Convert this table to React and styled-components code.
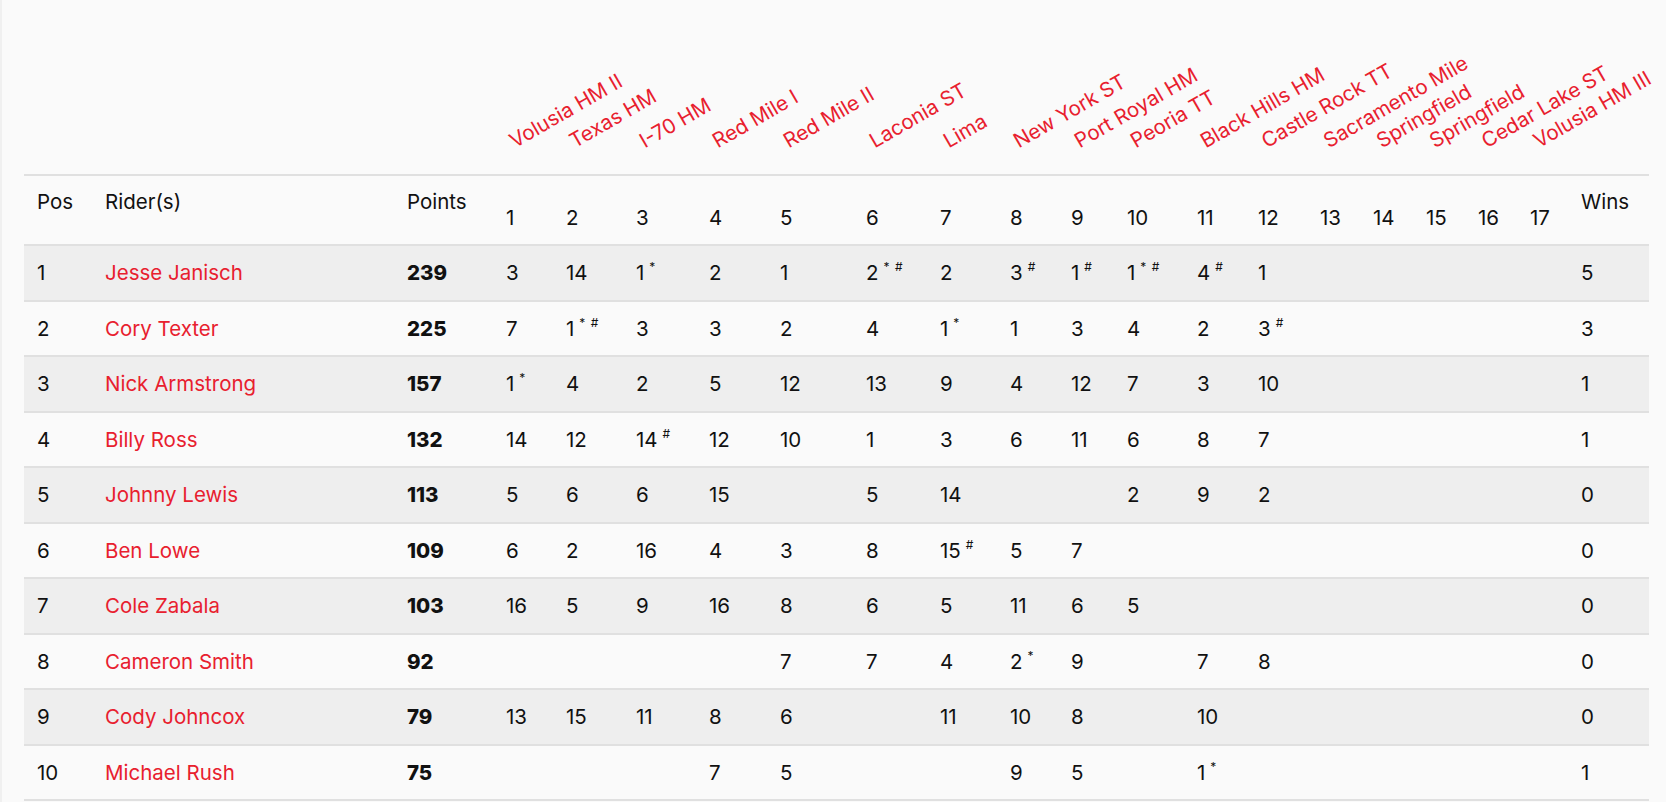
import React from 'react';
import styled, { createGlobalStyle } from 'styled-components';

const GlobalStyle = createGlobalStyle`
  html, body {
    margin: 0;
    padding: 0;
    background: #fafafa;
  }
  body {
    font-family: Inter, "Noto Sans", "Liberation Sans", sans-serif;
    color: #111;
  }
`;

const Page = styled.div`
  min-height: 100vh;
  box-sizing: border-box;
  border-left: 2px solid #f0f0f0;
  padding: 0 17px 0 22px;
  overflow: hidden;
`;

const Table = styled.table`
  width: 1625px;
  table-layout: fixed;
  border-collapse: separate;
  border-spacing: 0;
  font-size: 20.5px;
  line-height: 23.5px;
`;

const Col = styled.col`
  width: ${(p) => p.$w}px;
`;

const LabelRow = styled.tr`
  height: 174px;
`;

const LabelCell = styled.th`
  padding: 0 0 22px 24px;
  vertical-align: bottom;
  text-align: left;
  font-weight: 400;
`;

const RaceLabel = styled.span`
  display: inline-block;
  width: 0;
  white-space: nowrap;
  color: #e8202e;
  transform-origin: 0 100%;
  transform: rotate(-30deg);
`;

const HeadCell = styled.th`
  border-top: 2px solid #e0e0e0;
  padding: ${(p) => (p.$num ? '0 0 15px 13px' : '14px 0 0 13px')};
  height: 70px;
  box-sizing: border-box;
  vertical-align: ${(p) => (p.$num ? 'bottom' : 'top')};
  text-align: left;
  font-weight: 400;
  white-space: nowrap;
`;

const Row = styled.tr`
  background: ${(p) => (p.$alt ? '#eeeeee' : '#fafafa')};
`;

const Cell = styled.td`
  border-top: 2px solid #e0e0e0;
  border-bottom: ${(p) => (p.$last ? '2px solid #e0e0e0' : 'none')};
  padding: 15px 0 15px 13px;
  white-space: nowrap;
  font-weight: ${(p) => (p.$bold ? 800 : 400)};
`;

const RiderLink = styled.a`
  color: #e8202e;
  text-decoration: none;
`;

const Sup = styled.sup`
  font-size: 12px;
  line-height: 0;
  margin-left: 5px;
  vertical-align: 9px;
  word-spacing: 2px;
`;

const widths = [68, 302, 99, 60, 70, 73, 71, 86, 74, 70, 61, 56, 70, 61, 62, 53, 53, 52, 52, 51, 81];

const races = [
  'Volusia HM II', 'Texas HM', 'I-70 HM', 'Red Mile I', 'Red Mile II', 'Laconia ST', 'Lima',
  'New York ST', 'Port Royal HM', 'Peoria TT', 'Black Hills HM', 'Castle Rock TT',
  'Sacramento Mile', 'Springfield', 'Springfield', 'Cedar Lake ST', 'Volusia HM III',
];

const riders = [
  { pos: 1, name: 'Jesse Janisch', pts: 239, wins: 5, res: ['3', '14', '1*', '2', '1', '2*#', '2', '3#', '1#', '1*#', '4#', '1'] },
  { pos: 2, name: 'Cory Texter', pts: 225, wins: 3, res: ['7', '1*#', '3', '3', '2', '4', '1*', '1', '3', '4', '2', '3#'] },
  { pos: 3, name: 'Nick Armstrong', pts: 157, wins: 1, res: ['1*', '4', '2', '5', '12', '13', '9', '4', '12', '7', '3', '10'] },
  { pos: 4, name: 'Billy Ross', pts: 132, wins: 1, res: ['14', '12', '14#', '12', '10', '1', '3', '6', '11', '6', '8', '7'] },
  { pos: 5, name: 'Johnny Lewis', pts: 113, wins: 0, res: ['5', '6', '6', '15', '', '5', '14', '', '', '2', '9', '2'] },
  { pos: 6, name: 'Ben Lowe', pts: 109, wins: 0, res: ['6', '2', '16', '4', '3', '8', '15#', '5', '7'] },
  { pos: 7, name: 'Cole Zabala', pts: 103, wins: 0, res: ['16', '5', '9', '16', '8', '6', '5', '11', '6', '5'] },
  { pos: 8, name: 'Cameron Smith', pts: 92, wins: 0, res: ['', '', '', '', '7', '7', '4', '2*', '9', '', '7', '8'] },
  { pos: 9, name: 'Cody Johncox', pts: 79, wins: 0, res: ['13', '15', '11', '8', '6', '', '11', '10', '8', '', '10'] },
  { pos: 10, name: 'Michael Rush', pts: 75, wins: 1, res: ['', '', '', '7', '5', '', '', '9', '5', '', '1*'] },
];

// "2*#" -> 2 with superscript "* #"
const Result = ({ value }) => {
  if (!value) return null;
  const num = value.match(/^\d+/)[0];
  const flags = value.slice(num.length).split('');
  return (
    <>
      {num}
      {flags.length > 0 && <Sup>{flags.join(' ')}</Sup>}
    </>
  );
};

const App = () => (
  <>
    <GlobalStyle />
    <Page>
      <Table>
        <colgroup>
          {widths.map((w, i) => <Col key={i} $w={w} />)}
        </colgroup>
        <thead>
          <LabelRow>
            <th />
            <th />
            <th />
            {races.map((r, i) => (
              <LabelCell key={i}><RaceLabel>{r}</RaceLabel></LabelCell>
            ))}
            <th />
          </LabelRow>
          <tr>
            <HeadCell>Pos</HeadCell>
            <HeadCell>Rider(s)</HeadCell>
            <HeadCell>Points</HeadCell>
            {races.map((_, i) => <HeadCell key={i} $num>{i + 1}</HeadCell>)}
            <HeadCell>Wins</HeadCell>
          </tr>
        </thead>
        <tbody>
          {riders.map((r, idx) => {
            const last = idx === riders.length - 1;
            return (
              <Row key={r.pos} $alt={idx % 2 === 0}>
                <Cell $last={last}>{r.pos}</Cell>
                <Cell $last={last}><RiderLink href="#">{r.name}</RiderLink></Cell>
                <Cell $last={last} $bold>{r.pts}</Cell>
                {races.map((_, i) => (
                  <Cell key={i} $last={last}><Result value={r.res[i]} /></Cell>
                ))}
                <Cell $last={last}>{r.wins}</Cell>
              </Row>
            );
          })}
        </tbody>
      </Table>
    </Page>
  </>
);

export default App;
